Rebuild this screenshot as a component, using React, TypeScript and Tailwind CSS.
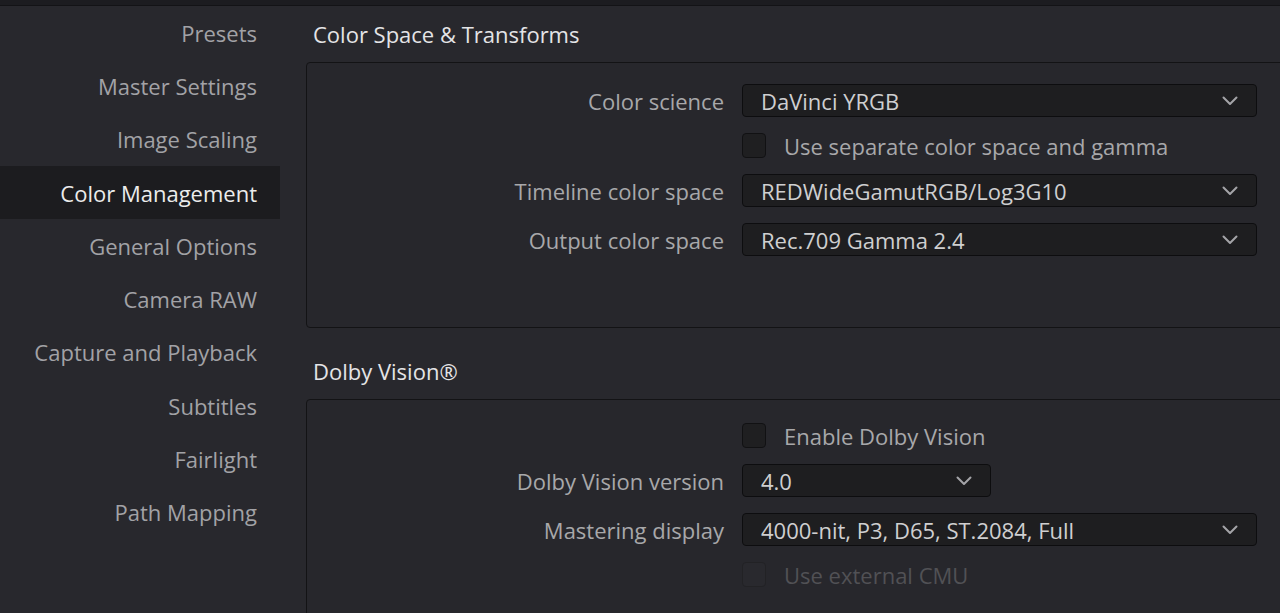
import React from "react";

const font = { fontFamily: '"Open Sans", "Noto Sans", sans-serif' };

const navItems = [
  "Presets",
  "Master Settings",
  "Image Scaling",
  "Color Management",
  "General Options",
  "Camera RAW",
  "Capture and Playback",
  "Subtitles",
  "Fairlight",
  "Path Mapping",
];

function Chevron() {
  return (
    <svg width="16" height="10" viewBox="0 0 16 10" fill="none" className="shrink-0">
      <path d="M1.5 1.5 L8 8 L14.5 1.5" stroke="#a4a4a8" strokeWidth="2" strokeLinecap="round" strokeLinejoin="round" />
    </svg>
  );
}

function Dropdown({ value, width }: { value: string; width: string }) {
  return (
    <div
      className={`${width} h-[33px] flex items-center justify-between pl-[18px] pr-[18px] bg-[#1e1e20] border border-[#0d0d0f] rounded-[4px] text-[#cfcfd0]`}
    >
      <span className="leading-none whitespace-nowrap">{value}</span>
      <Chevron />
    </div>
  );
}

function Row({ label, children }: { label?: string; children: React.ReactNode }) {
  return (
    <div className="flex items-center">
      <div className="w-[435px] shrink-0 text-right text-[#a8a8aa] pr-[18px] whitespace-nowrap">{label ?? ""}</div>
      {children}
    </div>
  );
}

function Check({ label, disabled }: { label: string; disabled?: boolean }) {
  return (
    <div className="flex items-center h-[25px]">
      <div
        className={`w-[24px] h-[25px] rounded-[4px] border ${
          disabled ? "border-[#222225] bg-[#29292e]" : "border-[#111113] bg-[#1f1f21]"
        }`}
      />
      <span className={`ml-[18px] whitespace-nowrap ${disabled ? "text-[#515155]" : "text-[#a8a8aa]"}`}>{label}</span>
    </div>
  );
}

export default function App() {
  return (
    <div style={font} className="w-[1280px] h-[613px] overflow-hidden bg-[#28282d] text-[22px] leading-[28px]">
      <div className="h-[6px] bg-[#1c1c20] border-b border-[#131316]" />
      <div className="flex">
        {/* Sidebar */}
        <div className="w-[280px] shrink-0 flex flex-col">
          {navItems.map((item) => {
            const active = item === "Color Management";
            return (
              <div
                key={item}
                className={`h-[53.3px] flex items-center justify-end pr-[23px] whitespace-nowrap ${
                  active ? "bg-[#1c1c1f] text-[#ececec]" : "text-[#a2a2a6]"
                }`}
              >
                {item}
              </div>
            );
          })}
        </div>

        {/* Main */}
        <div className="flex-1 pl-[26px] pt-[14px]">
          <div className="pl-[7px] text-[#e4e4e6] mb-[14px]">Color Space &amp; Transforms</div>
          <div className="w-[1000px] h-[266px] border border-[#131315] rounded-[4px] bg-[#27272c] pt-[21px] flex flex-col gap-4">
            <Row label="Color science">
              <Dropdown value="DaVinci YRGB" width="w-[515px]" />
            </Row>
            <Row>
              <Check label="Use separate color space and gamma" />
            </Row>
            <Row label="Timeline color space">
              <Dropdown value="REDWideGamutRGB/Log3G10" width="w-[515px]" />
            </Row>
            <Row label="Output color space">
              <Dropdown value="Rec.709 Gamma 2.4" width="w-[515px]" />
            </Row>
          </div>

          <div className="pl-[7px] text-[#e4e4e6] mt-[29px] mb-[14px]">Dolby Vision®</div>
          <div className="w-[1000px] h-[260px] border border-[#131315] rounded-[4px] bg-[#27272c] pt-[23px] flex flex-col gap-4">
            <Row>
              <Check label="Enable Dolby Vision" />
            </Row>
            <Row label="Dolby Vision version">
              <Dropdown value="4.0" width="w-[249px]" />
            </Row>
            <Row label="Mastering display">
              <Dropdown value="4000-nit, P3, D65, ST.2084, Full" width="w-[515px]" />
            </Row>
            <Row>
              <Check label="Use external CMU" disabled />
            </Row>
          </div>
        </div>
      </div>
    </div>
  );
}
